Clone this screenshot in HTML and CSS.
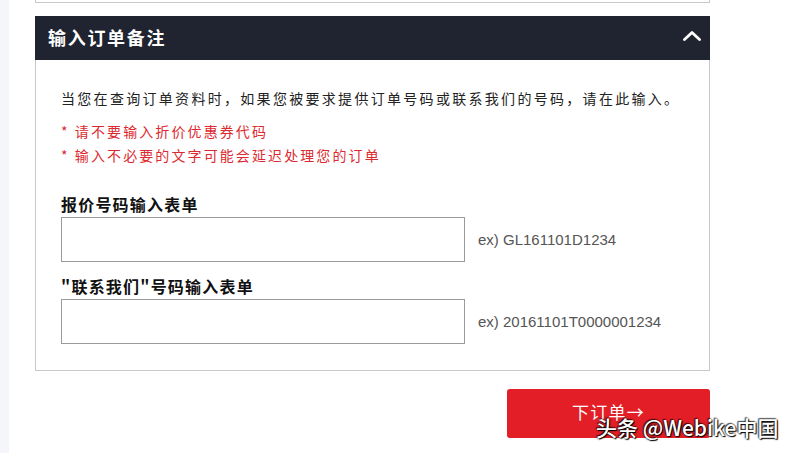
FILE: index.html
```html
<!DOCTYPE html>
<html lang="zh-CN">
<head>
<meta charset="utf-8">
<title>输入订单备注</title>
<link rel="stylesheet" href="styles.css">
</head>
<body>
<div class="page">
  <div class="strip"></div>
  <main class="content">
    <div class="prev-box"></div>
    <section class="panel">
      <header class="panel-head">
        <h2 class="panel-title">输入订单备注</h2>
        <svg class="chevron" width="18" height="11" viewBox="0 0 18 11"><polyline points="1.5,9.5 9,2.5 16.5,9.5" fill="none" stroke="#fff" stroke-width="2.8" stroke-linecap="round" stroke-linejoin="round"/></svg>
      </header>
      <div class="panel-body">
        <p class="intro">当您在查询订单资料时，如果您被要求提供订单号码或联系我们的号码，请在此输入。</p>
        <ul class="notes">
          <li>* 请不要输入折价优惠券代码</li>
          <li>* 输入不必要的文字可能会延迟处理您的订单</li>
        </ul>
        <div class="field first">
          <label class="field-label">报价号码输入表单</label>
          <div class="field-row">
            <input class="field-input" type="text">
            <span class="field-ex">ex) GL161101D1234</span>
          </div>
        </div>
        <div class="field">
          <label class="field-label">"联系我们"号码输入表单</label>
          <div class="field-row">
            <input class="field-input" type="text">
            <span class="field-ex">ex) 20161101T0000001234</span>
          </div>
        </div>
      </div>
    </section>
    <div class="actions">
      <button class="submit" type="button">下订单→</button>
    </div>
  </main>
</div>
<div class="watermark">头条 @Webike中国</div>
</body>
</html>
```

FILE: styles.css
```css
html, body {
  margin: 0;
  padding: 0;
  background: #fff;
  height: 100%;
  overflow: hidden;
}
body {
  font-family: "Noto Sans CJK SC", "Liberation Sans", sans-serif;
  color: #222;
  position: relative;
}
.page {
  display: flex;
  min-height: 453px;
}
.strip {
  width: 9px;
  flex: none;
  background: #f4f6fa;
}
.content {
  margin-left: 26px;
  width: 675px;
  display: flex;
  flex-direction: column;
}
.prev-box {
  height: 2px;
  border: 1px solid #c9c9c9;
  border-top: none;
  width: 673px;
}
.panel {
  margin-top: 13px;
}
.panel-head {
  height: 44px;
  background: #1f2430;
  display: flex;
  align-items: center;
  justify-content: space-between;
  padding: 0 9px 0 13px;
}
.panel-title {
  margin: 0;
  font-size: 18px;
  font-weight: 700;
  color: #fff;
  letter-spacing: 1.7px;
  line-height: 24px;
  margin-top: -2px;
}
.chevron {
  display: block;
  margin-top: -5px;
}
.panel-body {
  border: 1px solid #c9c9c9;
  border-top: none;
  padding: 26px 25px 26px 25px;
}
.intro {
  margin: 0;
  font-size: 14px;
  line-height: 24px;
  letter-spacing: 2.3px;
  color: #222;
}
.notes {
  list-style: none;
  margin: 9px 0 0 0;
  padding: 0;
  color: #dc2a30;
  font-size: 14px;
  line-height: 24px;
  letter-spacing: 2.1px;
}
.field {
  margin-top: 14px;
}
.field.first {
  margin-top: 27px;
}
.field-label {
  display: block;
  font-size: 16px;
  font-weight: 700;
  line-height: 20px;
  letter-spacing: 1.2px;
  color: #111;
  margin-bottom: 3px;
}
.field-row {
  display: flex;
  align-items: center;
  gap: 13px;
}
.field-input {
  box-sizing: border-box;
  width: 404px;
  height: 45px;
  margin: 0;
  border: 1px solid #9a9a9a;
  border-radius: 0;
  background: #fff;
  padding: 0 8px;
  font-size: 15px;
  outline: none;
}
.field-ex {
  font-family: "Liberation Sans", Arial, sans-serif;
  font-size: 15px;
  color: #555;
}
.actions {
  display: flex;
  justify-content: flex-end;
  margin-top: 18px;
}
.submit {
  width: 203px;
  height: 49px;
  border: none;
  border-radius: 3px;
  background: #e31e26;
  color: #fff;
  font-family: "Noto Sans CJK SC", sans-serif;
  font-size: 17px;
  letter-spacing: 1.3px;
  line-height: 20px;
  padding: 0 0 4px 0;
  cursor: pointer;
}
.watermark {
  position: absolute;
  left: 596px;
  top: 414px;
  font-family: "Noto Sans CJK SC", "Liberation Sans", sans-serif;
  font-size: 21px;
  font-weight: 500;
  line-height: 26px;
  color: #fff;
  white-space: nowrap;
  text-shadow: 0 0 2px #000, 1px 1px 1px #000, -1px -1px 1px rgba(0,0,0,.6);
}
```
